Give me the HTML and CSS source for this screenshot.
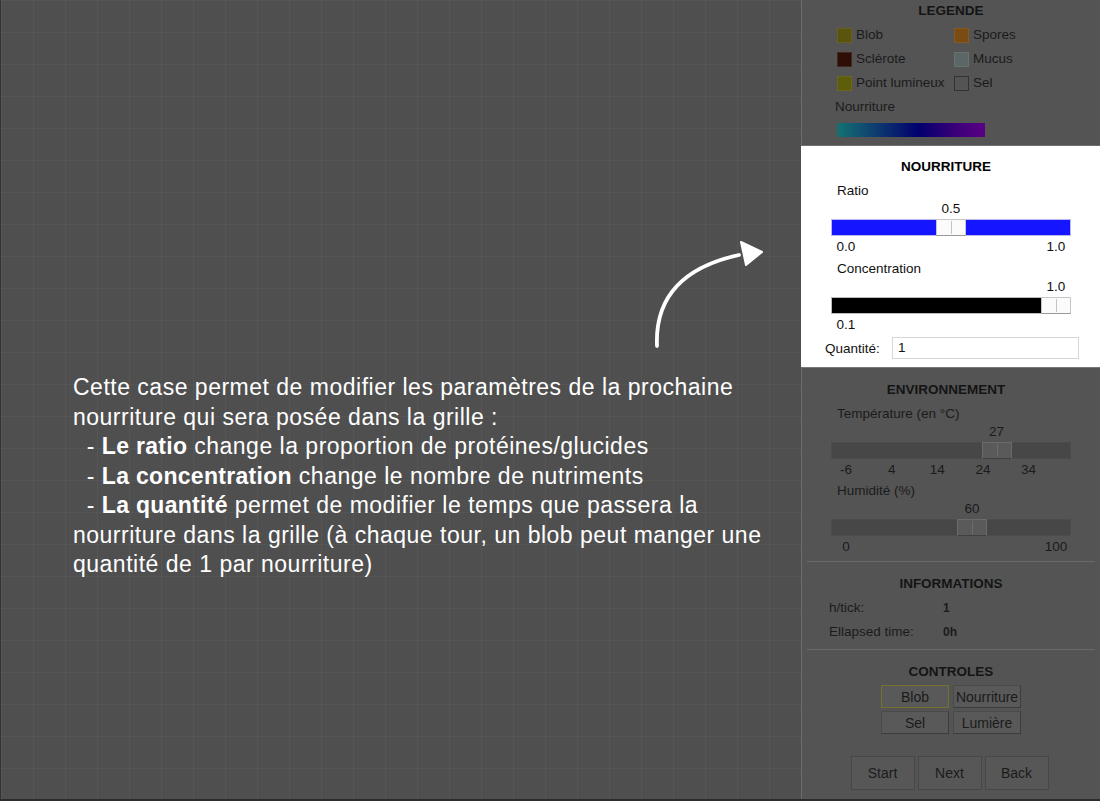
FILE: index.html
```html
<!DOCTYPE html>
<html lang="fr">
<head>
<meta charset="utf-8">
<title>Blob</title>
<link rel="stylesheet" href="styles.css">
</head>
<body>
<div class="app">
  <main class="grid"></main>
  <aside class="panel">
    <section class="sec legend">
      <h2 class="title">LEGENDE</h2>
      <div class="legend-items">
        <div class="li"><span class="sw sw-blob"></span>Blob</div>
        <div class="li"><span class="sw sw-spores"></span>Spores</div>
        <div class="li"><span class="sw sw-scl"></span>Sclérote</div>
        <div class="li"><span class="sw sw-mucus"></span>Mucus</div>
        <div class="li"><span class="sw sw-light"></span>Point lumineux</div>
        <div class="li"><span class="sw sw-sel"></span>Sel</div>
      </div>
      <div class="lbl food-lbl">Nourriture</div>
      <div class="gradient"></div>
    </section>

    <section class="sec food">
      <h2 class="title shift">NOURRITURE</h2>
      <div class="lbl">Ratio</div>
      <div class="slider">
        <div class="vals"><span class="v" style="--p:0.5">0.5</span></div>
        <div class="track track-blue"><span class="thumb" style="--p:0.5"></span></div>
        <div class="vals"><span class="v" style="--p:0">0.0</span><span class="v" style="--p:1">1.0</span></div>
      </div>
      <div class="lbl gap">Concentration</div>
      <div class="slider">
        <div class="vals"><span class="v" style="--p:1">1.0</span></div>
        <div class="track track-black"><span class="thumb" style="--p:1"></span></div>
        <div class="vals"><span class="v" style="--p:0">0.1</span></div>
      </div>
      <div class="qty">
        <label>Quantité:</label>
        <div class="input">1</div>
      </div>
    </section>

    <section class="sec env">
      <h2 class="title shift">ENVIRONNEMENT</h2>
      <div class="lbl">Température (en °C)</div>
      <div class="slider">
        <div class="vals"><span class="v" style="--p:0.717">27</span></div>
        <div class="track"><span class="thumb" style="--p:0.717"></span></div>
        <div class="vals">
          <span class="v" style="--p:0">-6</span>
          <span class="v" style="--p:0.2174">4</span>
          <span class="v" style="--p:0.4348">14</span>
          <span class="v" style="--p:0.6522">24</span>
          <span class="v" style="--p:0.8696">34</span>
        </div>
      </div>
      <div class="lbl gap2">Humidité (%)</div>
      <div class="slider">
        <div class="vals"><span class="v" style="--p:0.6">60</span></div>
        <div class="track"><span class="thumb" style="--p:0.6"></span></div>
        <div class="vals"><span class="v" style="--p:0">0</span><span class="v" style="--p:1">100</span></div>
      </div>
    </section>

    <section class="sec info">
      <h2 class="title">INFORMATIONS</h2>
      <div class="kv"><span class="k">h/tick:</span><span class="val">1</span></div>
      <div class="kv"><span class="k">Ellapsed time:</span><span class="val">0h</span></div>
    </section>

    <section class="sec controls">
      <h2 class="title">CONTROLES</h2>
      <div class="tools">
        <button class="btn sel">Blob</button>
        <button class="btn">Nourriture</button>
        <button class="btn">Sel</button>
        <button class="btn">Lumière</button>
      </div>
      <div class="actions">
        <button class="big">Start</button>
        <button class="big">Next</button>
        <button class="big">Back</button>
      </div>
    </section>
  </aside>
</div>

<div class="tip">Cette case permet de modifier les paramètres de la prochaine<br>nourriture qui sera posée dans la grille :<br>&nbsp;&nbsp;- <b>Le ratio</b> change la proportion de protéines/glucides<br>&nbsp;&nbsp;- <b>La concentration</b> change le nombre de nutriments<br>&nbsp;&nbsp;- <b>La quantité</b> permet de modifier le temps que passera la<br>nourriture dans la grille (à chaque tour, un blob peut manger une<br>quantité de 1 par nourriture)</div>

<svg class="arrow" width="130" height="120" viewBox="0 0 130 120">
  <path d="M22 116 C20 70 45 38 104 25" fill="none" stroke="#fff" stroke-width="3.8" stroke-linecap="round"/>
  <polygon points="106,12 127,22 111,35" fill="#fff" stroke="#fff" stroke-width="2" stroke-linejoin="round"/>
</svg>
</body>
</html>
```

FILE: styles.css
```css
* { box-sizing: border-box; }
html, body {
  margin: 0;
  padding: 0;
  width: 1100px;
  height: 801px;
  overflow: hidden;
  background: #2c2c2c;
  font-family: "Liberation Sans", Arial, sans-serif;
}
.app {
  display: flex;
  width: 1100px;
  height: 799px;
}
.grid {
  width: 801px;
  height: 100%;
  border-left: 1px solid #333;
  background-color: #4f4f4f;
  background-image:
    linear-gradient(to right, #565656 1px, transparent 1px),
    linear-gradient(to bottom, #555555 1px, transparent 1px);
  background-size: 32px 32px;
  background-position: 0 0;
}
.panel {
  width: 299px;
  height: 100%;
  background: #545454;
  border-left: 1px solid #6d6d6d;
  color: #1b1b1b;
  font-size: 13.5px;
  display: flex;
  flex-direction: column;
}
.sec { position: relative; }
.title {
  margin: 0;
  font-size: 13.5px;
  font-weight: bold;
  line-height: 16px;
  text-align: center;
  color: #141414;
}
.title.shift { padding-right: 10px; }
.lbl { line-height: 16px; padding-left: 35px; }

/* legend */
.legend { height: 145px; padding-top: 3px; }
.legend-items {
  display: grid;
  grid-template-columns: 117px 100px;
  row-gap: 8px;
  margin: 8px 0 0 35px;
}
.li { display: flex; align-items: center; line-height: 16px; white-space: nowrap; }
.sw {
  width: 15px; height: 15px;
  margin-right: 4px;
  border: 1px solid rgba(255,255,255,0.08);
}
.sw-blob { background: #5b540e; }
.sw-spores { background: #7a4b12; }
.sw-scl { background: #2f0f05; border-color: #3f2a22; }
.sw-mucus { background: #5d6666; }
.sw-light { background: #5d5d0b; }
.sw-sel { background: transparent; border: 1px solid #333; }
.food-lbl { margin-top: 8px; padding-left: 33px; }
.gradient {
  margin: 8px 0 0 35px;
  width: 148px;
  height: 14px;
  background: linear-gradient(to right, #157272, #0a2a6e 35%, #00006e 55%, #3a0078 80%, #5a0085);
}

/* food (highlighted) */
.food {
  height: 222px;
  background: #fff;
  color: #111;
  padding-top: 13px;
  border-top: 1px solid #6f6f6f;
  margin-left: -1px;
  padding-left: 1px;
  z-index: 2;
}
.food .title { color: #000; }
.food .lbl { margin-top: 8px; }
.food .lbl.gap { margin-top: 6px; }
.slider { width: 240px; margin-left: 29px; }
.vals { position: relative; height: 16px; line-height: 16px; margin: 2px 0; }
.v {
  position: absolute;
  top: 0;
  left: calc(15px + var(--p) * 210px);
  transform: translateX(-50%);
  white-space: nowrap;
}
.vals + .track + .vals { margin-top: 3px; }
.track {
  position: relative;
  height: 17px;
  background: #474747;
  border: 1px solid #4c4c4c;
}
.track-blue { background: #1515ff; border-color: #b9b9f0; }
.track-black { background: #000; border-color: #bbb; }
.thumb {
  position: absolute;
  top: -1px;
  left: calc(var(--p) * 210px - 1px);
  width: 30px;
  height: 17px;
  background: #5a5a5a;
  border: 1px solid #6a6a6a;
  border-bottom-color: #404040;
}
.thumb::after {
  content: "";
  position: absolute;
  left: 14px;
  top: 1px;
  bottom: 1px;
  width: 1px;
  background: #6c6c6c;
}
.food .thumb { background: #fbfbfb; border-color: #c6c6c6; border-bottom-color: #999; }
.food .thumb::after { background: #c4c4c4; }
.qty {
  display: flex;
  align-items: center;
  margin-top: 4px;
  padding-left: 23px;
}
.qty label { width: 67px; }
.input {
  width: 187px;
  height: 22px;
  border: 1px solid #d6d6d6;
  padding-left: 5px;
  line-height: 20px;
}

/* env */
.env {
  height: 194px;
  padding-top: 14px;
  border-top: 1px solid #777;
}
.env .lbl { margin-top: 8px; }
.env .lbl.gap2 { margin-top: 5px; }

/* info */
.info {
  height: 88px;
  padding-top: 14px;
  border-top: 1px solid #6a6a6a;
  margin: 0 5px;
}
.kv { display: flex; line-height: 16px; margin-top: 8px; padding-left: 22px; }
.kv .k { width: 114px; }
.kv .val { font-weight: bold; font-size: 12px; }

/* controls */
.controls {
  flex: 1;
  padding-top: 14px;
  border-top: 1px solid #6a6a6a;
  margin: 0 5px;
}
.tools {
  display: grid;
  grid-template-columns: 68px 68px;
  column-gap: 4px;
  row-gap: 3px;
  justify-content: center;
  margin-top: 5px;
}
button {
  font-family: inherit;
  color: #1b1b1b;
  cursor: default;
}
.btn {
  height: 23px;
  font-size: 14px;
  background: #595959;
  border: 1px solid #4a4a4a;
  border-right-color: #3c3c3c;
  border-bottom-color: #3c3c3c;
  padding: 0;
}
.btn.sel { border: 1px solid #787030; }
.actions {
  display: flex;
  justify-content: center;
  gap: 3px;
  margin-top: 22px;
  padding-right: 3px;
}
.big {
  width: 64px;
  height: 34px;
  font-size: 14px;
  background: #575757;
  border: 1px solid #474747;
  padding: 0;
}

/* tutorial overlay */
.tip {
  position: absolute;
  left: 73px;
  top: 373px;
  color: #fff;
  font-size: 23px;
  letter-spacing: 0.5px;
  line-height: 29.5px;
  white-space: nowrap;
}
.tip b { font-weight: bold; letter-spacing: 0.3px; }
.arrow {
  position: absolute;
  left: 635px;
  top: 230px;
}
```
